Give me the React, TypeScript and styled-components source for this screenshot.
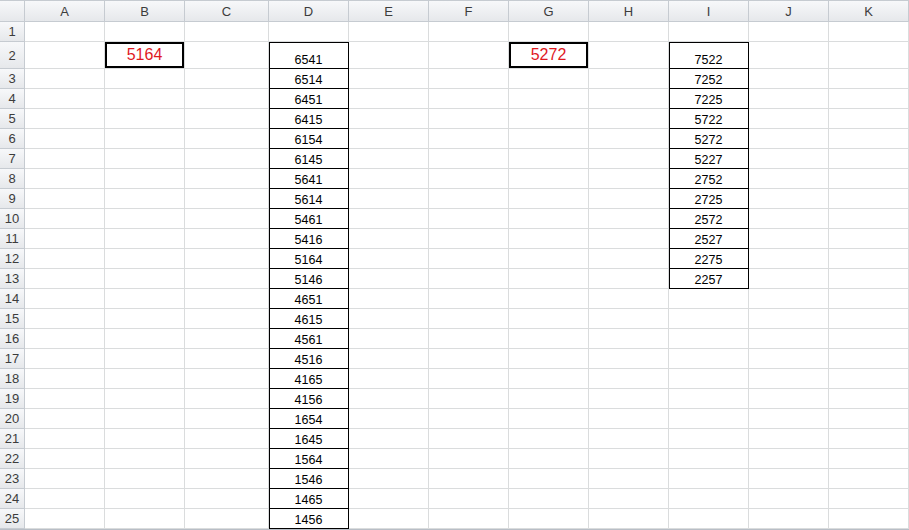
import React from "react";
import styled, { createGlobalStyle, css } from "styled-components";

const G = createGlobalStyle`
  html, body { margin: 0; padding: 0; background: #fff; overflow: hidden; }
  body { font-family: "Liberation Sans", Arial, sans-serif; }
`;

const cols = ["A","B","C","D","E","F","G","H","I","J","K"];
const widths = [25, 80, 80, 84, 80, 80, 80, 80, 80, 80, 80, 80];

const Sheet = styled.div`
  display: grid;
  grid-template-columns: ${widths.join("px ")}px;
  grid-template-rows: 22px 20px 27px repeat(23, 20px);
  width: 909px;
  overflow: hidden;
`;

const Head = styled.div<{ $row?: boolean }>`
  background: linear-gradient(#f7f8fa, #e6e8eb);
  border-right: 1px solid #c6cbd1;
  border-bottom: 1px solid #c6cbd1;
  border-top: ${p => (p.$row ? "0" : "1px solid #c6cbd1")};
  color: #3c3c3c;
  font-size: 13px;
  display: flex;
  align-items: center;
  justify-content: center;
  box-sizing: border-box;
`;

const Cell = styled.div<{ $box?: boolean; $top?: boolean; $thick?: boolean }>`
  border-right: 1px solid #dadcdd;
  border-bottom: 1px solid #dadcdd;
  box-sizing: border-box;
  display: flex;
  align-items: flex-end;
  justify-content: center;
  padding-bottom: 1px;
  font-size: 12.5px;
  color: #000;
  ${p => p.$box && css`
    border-right-color: #000;
    border-bottom-color: #000;
    box-shadow: inset 1px ${p.$top ? "1px" : "0"} 0 #000;
  `}
  ${p => p.$thick && css`
    box-shadow: inset 0 0 0 2px #000;
    color: #e0191f;
    font-size: 16px;
    align-items: center;
    padding: 0;
  `}
`;

const Bottom = styled.div`
  height: 1px;
  background: #b8bec6;
`;

const D = ["6541","6514","6451","6415","6154","6145","5641","5614","5461","5416","5164","5146","4651","4615","4561","4516","4165","4156","1654","1645","1564","1546","1465","1456"];
const I = ["7522","7252","7225","5722","5272","5227","2752","2725","2572","2527","2275","2257"];

export default function App() {
  const cells: React.ReactNode[] = [];
  cells.push(<Head key="c" />);
  cols.forEach(c => cells.push(<Head key={c}>{c}</Head>));
  for (let r = 1; r <= 25; r++) {
    cells.push(<Head key={"r" + r} $row>{r}</Head>);
    cols.forEach(c => {
      let content: string | undefined;
      let box = false, thick = false;
      if (r === 2 && c === "B") { content = "5164"; thick = true; }
      if (r === 2 && c === "G") { content = "5272"; thick = true; }
      if (c === "D" && r >= 2) { content = D[r - 2]; box = true; }
      if (c === "I" && r >= 2 && r <= 13) { content = I[r - 2]; box = true; }
      cells.push(<Cell key={c + r} $box={box} $top={r === 2} $thick={thick}>{content}</Cell>);
    });
  }
  return (
    <>
      <G />
      <Sheet>{cells}</Sheet>
      <Bottom />
    </>
  );
}
